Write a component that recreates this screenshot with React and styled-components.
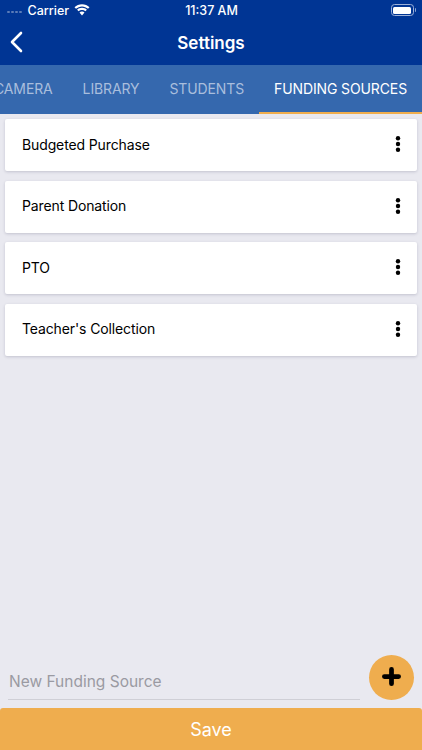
import React from "react";
import styled, { createGlobalStyle } from "styled-components";

const FONT = `Inter, "Liberation Sans", Arial, sans-serif`;

const sources = ["Budgeted Purchase", "Parent Donation", "PTO", "Teacher's Collection"];
const tabs = ["CAMERA", "LIBRARY", "STUDENTS", "FUNDING SOURCES"];

const Global = createGlobalStyle`
  html, body {
    margin: 0;
    padding: 0;
    background: #e9e9f0;
  }
  * {
    box-sizing: border-box;
  }
`;

const App = () => (
  <>
    <Global />
    <Screen>
      <Header>
        <StatusBar>
          <StatusLeft>
            <Signal>
              {[0, 1, 2, 3].map((i) => (
                <i key={i} />
              ))}
            </Signal>
            <Carrier>Carrier</Carrier>
            <svg width="16" height="12" viewBox="0 0 16 12" fill="#fff">
              <path d="M8 2.4c2.300 0 4.400.9 6 2.400l1.500-1.600C13.500 1.300 10.900.2 8 .2S2.500 1.300.5 3.200L2 4.800c1.600-1.500 3.700-2.400 6-2.400z" />
              <path d="M8 6c1.300 0 2.500.5 3.400 1.300l1.500-1.600C11.600 4.500 9.900 3.800 8 3.800s-3.600.7-4.900 1.900l1.500 1.600C5.500 6.500 6.700 6 8 6z" />
              <path d="M8 7.400c-1 0-1.800.4-2.500 1L8 11.400l2.500-3c-.7-.6-1.500-1-2.500-1z" />
            </svg>
          </StatusLeft>
          <Clock>11:37 AM</Clock>
          <Battery>
            <BatteryBody>
              <BatteryFill />
            </BatteryBody>
            <BatteryTip />
          </Battery>
        </StatusBar>
        <NavBar>
          <BackButton>
            <svg width="14" height="22" viewBox="0 0 14 22" fill="none">
              <path d="M12 2 3 11l9 9" stroke="#fff" strokeWidth="2.6" strokeLinecap="round" strokeLinejoin="round" />
            </svg>
          </BackButton>
          <Title>Settings</Title>
        </NavBar>
      </Header>

      <TabBar>
        {tabs.map((t) => (
          <Tab key={t} $active={t === "FUNDING SOURCES"}>
            {t}
          </Tab>
        ))}
      </TabBar>

      <List>
        {sources.map((s) => (
          <Card key={s}>
            <CardLabel>{s}</CardLabel>
            <svg width="6" height="16" viewBox="0 0 6 16" fill="#000">
              <circle cx="3" cy="2.300" r="2.200" />
              <circle cx="3" cy="8" r="2.200" />
              <circle cx="3" cy="13.700" r="2.200" />
            </svg>
          </Card>
        ))}
      </List>

      <Composer>
        <NewSource>New Funding Source</NewSource>
        <AddButton>
          <svg width="19" height="19" viewBox="0 0 20 20">
            <path d="M10 2.500v15M2.500 10h15" stroke="#000" strokeWidth="5" strokeLinecap="round" />
          </svg>
        </AddButton>
      </Composer>
      <SaveButton>Save</SaveButton>
    </Screen>
  </>
);

const Screen = styled.div`
  width: 422px;
  height: 750px;
  display: flex;
  flex-direction: column;
  overflow: hidden;
  background: #e9e9f0;
  font-family: ${FONT};
`;

const Header = styled.div`
  height: 65px;
  background: #003594;
  color: #fff;
`;

const StatusBar = styled.div`
  height: 20px;
  padding: 0 6px 0 7px;
  display: grid;
  grid-template-columns: 1fr auto 1fr;
  align-items: center;
  font-size: 12.500px;
  font-weight: 500;
`;

const StatusLeft = styled.div`
  display: flex;
  align-items: center;
  gap: 5px;
`;

const Carrier = styled.span`
  margin-left: 1px;
`;

const Signal = styled.div`
  display: flex;
  gap: 1.500px;
  margin-top: 4px;
  i {
    width: 2.500px;
    height: 2.500px;
    border-radius: 50%;
    background: #5b7cb8;
  }
`;

const Clock = styled.span`
  font-size: 12.500px;
`;

const Battery = styled.div`
  justify-self: end;
  display: flex;
  align-items: center;
  gap: 1px;
`;

const BatteryBody = styled.div`
  width: 23px;
  height: 12px;
  padding: 1.500px;
  border: 1px solid #9db1d8;
  border-radius: 3.500px;
`;

const BatteryFill = styled.div`
  height: 100%;
  background: #fff;
  border-radius: 1.500px;
`;

const BatteryTip = styled.div`
  width: 1.500px;
  height: 4px;
  background: #8fa6d2;
  border-radius: 0 1px 1px 0;
`;

const NavBar = styled.div`
  position: relative;
  height: 45px;
  display: flex;
  align-items: center;
  justify-content: center;
`;

const BackButton = styled.div`
  position: absolute;
  left: 9px;
  top: 11px;
  display: flex;
`;

const Title = styled.div`
  font-size: 17px;
  font-weight: 600;
  margin-top: 1px;
`;

const TabBar = styled.div`
  height: 49px;
  display: flex;
  justify-content: flex-end;
  overflow: hidden;
  background: #3568ae;
`;

const Tab = styled.div`
  flex-shrink: 0;
  padding: 0 15px;
  display: flex;
  align-items: center;
  font-size: 14px;
  letter-spacing: -0.120px;
  color: ${(p) => (p.$active ? "#fff" : "#a9bedd")};
  border-bottom: 2px solid ${(p) => (p.$active ? "#efad4e" : "transparent")};
`;

const List = styled.div`
  flex: 1;
  padding: 5px 5px 0;
  display: flex;
  flex-direction: column;
  gap: 9.500px;
`;

const Card = styled.div`
  height: 52px;
  padding: 0 16px 2px 17px;
  display: flex;
  align-items: center;
  justify-content: space-between;
  background: #fff;
  border-radius: 2px;
  box-shadow: 0 1px 3px rgba(60, 60, 90, 0.22);
`;

const CardLabel = styled.span`
  font-size: 14px;
  letter-spacing: -0.120px;
  color: #000;
`;

const Composer = styled.div`
  padding: 0 8px 8px;
  display: flex;
  align-items: flex-end;
  justify-content: space-between;
`;

const NewSource = styled.div`
  width: 352px;
  height: 37px;
  padding: 0 0 8px 1px;
  display: flex;
  align-items: flex-end;
  font-size: 15.500px;
  color: #9a9aa2;
  border-bottom: 1px solid #cfcfd6;
`;

const AddButton = styled.div`
  width: 45px;
  height: 45px;
  padding: 0 1px 2px 0;
  display: flex;
  align-items: center;
  justify-content: center;
  border-radius: 50%;
  background: #efad4e;
`;

const SaveButton = styled.div`
  height: 42px;
  display: flex;
  align-items: center;
  justify-content: center;
  background: #efad4e;
  border-radius: 3px 3px 0 0;
  color: #fff;
  font-size: 18px;
`;

export default App;
